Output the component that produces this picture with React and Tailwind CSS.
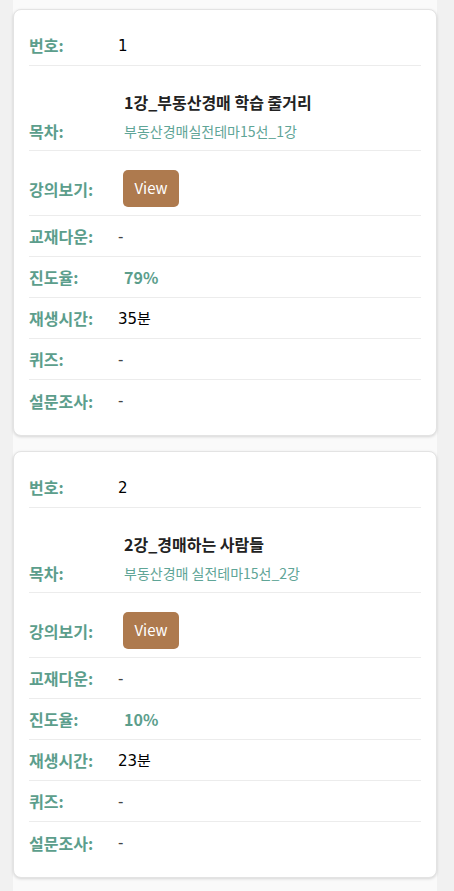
import React from "react";

const lectures = [
  { no: "1", title: "1강_부동산경매 학습 줄거리", sub: "부동산경매실전테마15선_1강", rate: "79%", time: "35분" },
  { no: "2", title: "2강_경매하는 사람들", sub: "부동산경매 실전테마15선_2강", rate: "10%", time: "23분" },
];

const KR = { fontFamily: '"Noto Sans CJK KR", "Noto Sans", sans-serif' };
const VAL = { fontFamily: '"DejaVu Sans", "Noto Sans CJK KR", sans-serif' };

function Label({ children }) {
  return (
    <div className="w-[89px] shrink-0 text-[16px] font-bold text-[#5c9e8c] leading-[20px]" style={KR}>
      {children}
    </div>
  );
}

function Row({ label, children, last }) {
  return (
    <div className={`flex items-center h-[41px] ${last ? "" : "border-b border-[#ececec]"}`}>
      <Label>{label}</Label>
      <div className="leading-[20px]">{children}</div>
    </div>
  );
}

function Dash() {
  return <span className="text-[15px] text-[#444]" style={VAL}>-</span>;
}

function Card({ item }) {
  return (
    <div className="bg-white rounded-[8px] border border-[#e3e3e3] shadow-[0_1px_3px_rgba(0,0,0,0.15)] px-[15px] pt-[15px] pb-[14px] mb-[15px]">
      <Row label="번호:">
        <span className="text-[15px] text-black" style={VAL}>{item.no}</span>
      </Row>
      <div className="flex items-end h-[85px] pb-[9px] border-b border-[#ececec]">
        <Label>목차:</Label>
        <div className="pl-[6px]" style={KR}>
          <div className="text-[16px] font-bold text-[#222] leading-[24px]">{item.title}</div>
          <div className="text-[14px] text-[#5fa597] leading-[20px] mt-[7px]">{item.sub}</div>
        </div>
      </div>
      <div className="flex items-start h-[65px] pt-[19px] border-b border-[#ececec]">
        <div className="flex items-center h-[37px]">
          <Label>강의보기:</Label>
          <button
            className="ml-[5px] w-[56px] h-[37px] rounded-[5px] bg-[#ae7a4e] text-white text-[15px] flex items-center justify-center"
            style={KR}
          >
            View
          </button>
        </div>
      </div>
      <Row label="교재다운:"><Dash /></Row>
      <Row label="진도율:">
        <span className="pl-[6px] text-[16px] font-bold text-[#5c9e8c]" style={KR}>{item.rate}</span>
      </Row>
      <Row label="재생시간:">
        <span className="text-[15px] text-black" style={VAL}>{item.time}</span>
      </Row>
      <Row label="퀴즈:"><Dash /></Row>
      <Row label="설문조사:" last><Dash /></Row>
    </div>
  );
}

export default function App() {
  return (
    <div className="min-h-[891px] bg-[#f1f1f1]">
      <div className="ml-[13px] w-[424px] min-h-[891px] bg-[#fafafa] pt-[9px]">
        {lectures.map((l) => (
          <Card key={l.no} item={l} />
        ))}
      </div>
    </div>
  );
}
